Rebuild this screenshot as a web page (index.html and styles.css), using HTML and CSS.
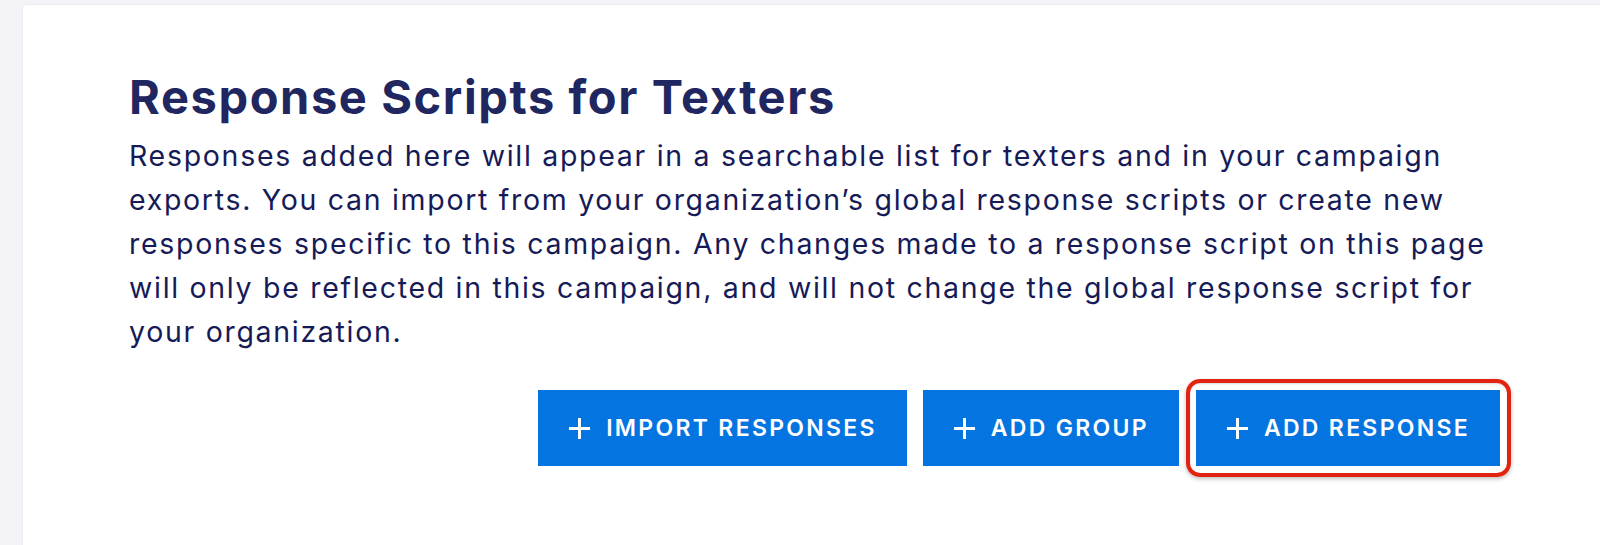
FILE: index.html
```html
<!DOCTYPE html>
<html lang="en">
<head>
<meta charset="utf-8">
<title>Response Scripts for Texters</title>
<link rel="stylesheet" href="styles.css">
</head>
<body>
<div class="page">
  <section class="card">
    <div class="content">
      <h1 class="title">Response Scripts for Texters</h1>
      <p class="desc">Responses added here will appear in a searchable list for texters and in your campaign<br>exports. You can import from your organization’s global response scripts or create new<br>responses specific to this campaign. Any changes made to a response script on this page<br>will only be reflected in this campaign, and will not change the global response script for<br>your organization.</p>
      <div class="actions">
        <button class="btn" type="button">
          <svg class="plus" viewBox="0 0 24 24" aria-hidden="true"><path d="M12 1v22M1 12h22"/></svg>
          <span>Import Responses</span>
        </button>
        <button class="btn" type="button">
          <svg class="plus" viewBox="0 0 24 24" aria-hidden="true"><path d="M12 1v22M1 12h22"/></svg>
          <span>Add Group</span>
        </button>
        <div class="highlight">
          <button class="btn" type="button">
            <svg class="plus" viewBox="0 0 24 24" aria-hidden="true"><path d="M12 1v22M1 12h22"/></svg>
            <span>Add Response</span>
          </button>
        </div>
      </div>
    </div>
  </section>
</div>
</body>
</html>
```

FILE: styles.css
```css
* { box-sizing: border-box; }
html, body { margin: 0; padding: 0; }
body {
  background: #f4f4f8;
  font-family: Inter, "Noto Sans", "DejaVu Sans", sans-serif;
  height: 545px;
  overflow: hidden;
}
.page {
  padding: 5px 0 0 23px;
  height: 545px;
  overflow: hidden;
}
.card {
  background: #ffffff;
  height: 560px;
  border-radius: 4px 0 0 0;
  box-shadow: 0 0 3px rgba(30, 40, 90, 0.10);
  padding: 65px 0 0 106px;
}
.content {
  width: 1371px;
}
.title {
  margin: 0;
  font-size: 47px;
  line-height: 53px;
  font-weight: 700;
  color: #1f2660;
  letter-spacing: 1.6px;
}
.desc {
  margin: 11px 0 0 0;
  font-size: 28.5px;
  line-height: 44px;
  font-weight: 400;
  letter-spacing: 1.7px;
  color: #161b57;
  white-space: nowrap;
}
.actions {
  margin-top: 36px;
  display: flex;
  justify-content: flex-end;
  align-items: center;
  gap: 16px;
}
.btn {
  height: 76px;
  display: flex;
  align-items: center;
  gap: 15px;
  padding: 0 30px;
  border: none;
  border-radius: 0;
  background: #0474e0;
  color: #ffffff;
  font-family: inherit;
  font-size: 23px;
  font-weight: 600;
  letter-spacing: 2.3px;
  text-transform: uppercase;
  white-space: nowrap;
}
.plus {
  width: 23px;
  height: 23px;
  flex: none;
}
.plus path {
  stroke: #ffffff;
  stroke-width: 3.1;
  fill: none;
}
.highlight {
  position: relative;
  margin-left: 1px;
}
.highlight::after {
  content: "";
  position: absolute;
  top: -11px;
  bottom: -11px;
  left: -10px;
  right: -11px;
  border: 4px solid #e2230f;
  border-radius: 14px;
  box-shadow: 0 2px 4px rgba(0, 0, 0, 0.25), inset 0 1px 2px rgba(0, 0, 0, 0.15);
  pointer-events: none;
}
```
